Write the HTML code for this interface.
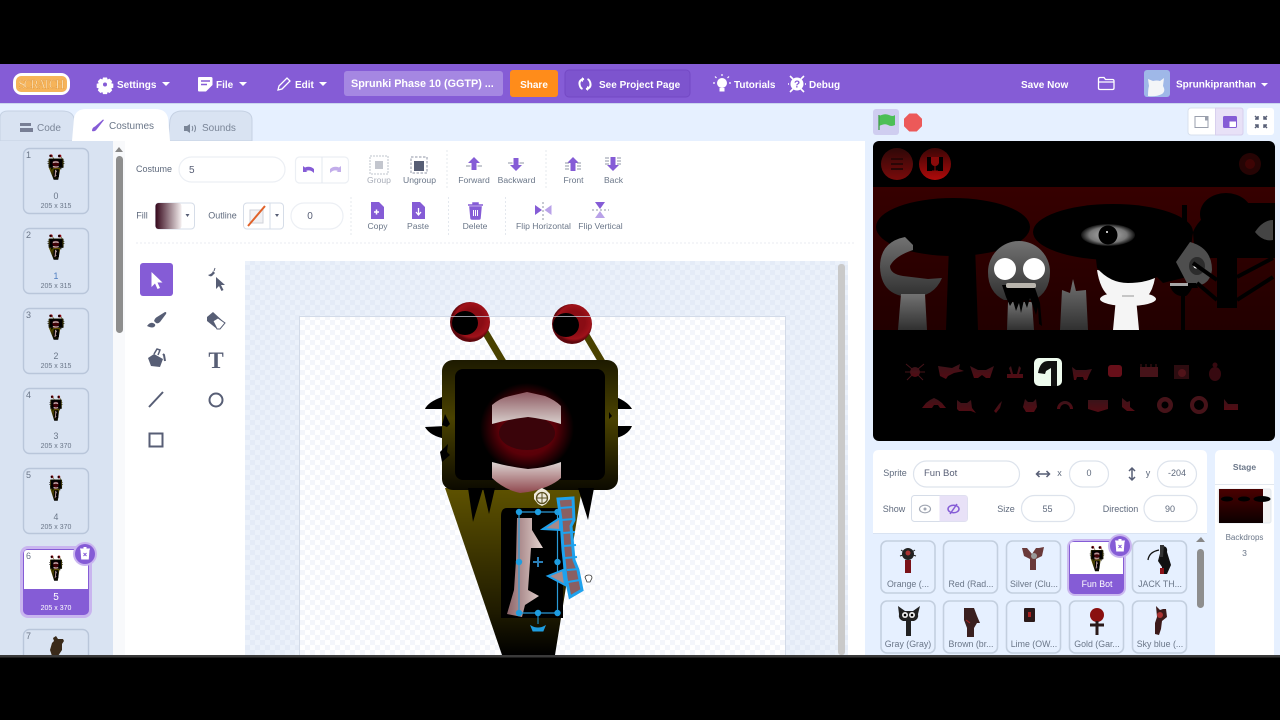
<!DOCTYPE html>
<html><head><meta charset="utf-8"><title>Scratch editor</title>
<style>
html,body{margin:0;padding:0;background:#000;width:1280px;height:720px;overflow:hidden}
svg{display:block;filter:blur(.35px)}
text{font-family:"Liberation Sans",sans-serif}
.h{fill:#fff;font-size:10px;font-weight:700}
.l{fill:#5c6b80;font-size:10px}
.m{text-anchor:middle}
.t{fill:#6a7688;font-size:8.6px;text-anchor:middle}
.s{fill:#6a7688;font-size:7px;text-anchor:middle}
.n{fill:#6a7688;font-size:9px}
.c{fill:#6a7688;font-size:8.8px;text-anchor:middle}
.i{fill:#5f6a7d;font-size:9px;text-anchor:middle}
.card{fill:#e6f0ff;stroke:#c3cfdf;stroke-width:1.6}
.cc{fill:#d9e3f2;stroke:#b9c6da;stroke-width:1.4}
.inp{fill:#fff;stroke:#eceff4;stroke-width:1.2}
.inp2{fill:#fff;stroke:#dde3ec;stroke-width:1.2}
.p{fill:#855cd6}
.tool{fill:none;stroke:#575e75;stroke-width:2}
.tf{fill:#575e75}
.red{fill:url(#ic)}
</style></head><body>
<svg width="1280" height="720" viewBox="0 0 1280 720" xmlns="http://www.w3.org/2000/svg">
<defs>
<pattern id="chk" width="10" height="10" patternUnits="userSpaceOnUse"><rect width="10" height="10" fill="#fff"/><rect width="5" height="5" fill="#f4f6fb"/><rect x="5" y="5" width="5" height="5" fill="#f4f6fb"/></pattern>
<pattern id="chk2" width="10" height="10" patternUnits="userSpaceOnUse"><rect width="10" height="10" fill="#ebf1fa"/><rect width="5" height="5" fill="#e4ebf7"/><rect x="5" y="5" width="5" height="5" fill="#e4ebf7"/></pattern>
<linearGradient id="fill" x1="0" x2="1" y1="0" y2="0"><stop offset="0" stop-color="#35061a"/><stop offset="1" stop-color="#f4eeee"/></linearGradient>
<linearGradient id="ol" x1="0" x2="0" y1="0" y2="1"><stop offset="0" stop-color="#5e5200"/><stop offset=".75" stop-color="#1e1a00"/><stop offset="1" stop-color="#000"/></linearGradient>
<linearGradient id="head" x1="0" x2="0" y1="0" y2="1"><stop offset="0" stop-color="#1d1a00"/><stop offset=".45" stop-color="#4a4200"/><stop offset="1" stop-color="#0c0a00"/></linearGradient>
<linearGradient id="teeth" x1="0" x2="0" y1="0" y2="1"><stop offset="0" stop-color="#8e5a62"/><stop offset="1" stop-color="#d8cfcc"/></linearGradient>
<linearGradient id="teeth2" x1="0" x2="0" y1="0" y2="1"><stop offset="0" stop-color="#dcd4d2"/><stop offset="1" stop-color="#90484e"/></linearGradient>
<linearGradient id="pt" x1="0" x2="1" y1="0" y2="0"><stop offset="0" stop-color="#8c6468"/><stop offset="1" stop-color="#e4d4d0"/></linearGradient>
<radialGradient id="mouth"><stop offset="0" stop-color="#6a0810"/><stop offset=".6" stop-color="#5a0008"/><stop offset="1" stop-color="#000"/></radialGradient>
<radialGradient id="eye" cx=".55" cy=".45"><stop offset=".55" stop-color="#8a0c14"/><stop offset=".85" stop-color="#a0121a"/><stop offset="1" stop-color="#5e060c"/></radialGradient>
<linearGradient id="gr" x1="0" x2="0" y1="0" y2="1"><stop offset="0" stop-color="#727272"/><stop offset="1" stop-color="#303030"/></linearGradient>
<linearGradient id="bg" x1="0" x2="0" y1="0" y2="1"><stop offset="0" stop-color="#360000"/><stop offset="1" stop-color="#220000"/></linearGradient>
<linearGradient id="ic" x1="0" x2="0" y1="0" y2="1"><stop offset="0" stop-color="#4e1a22"/><stop offset="1" stop-color="#70101a"/></linearGradient>
<linearGradient id="btn" x1="0" x2="0" y1="0" y2="1"><stop offset="0" stop-color="#2e0808"/><stop offset="1" stop-color="#7a0a0a"/></linearGradient>
<linearGradient id="btn2" x1="0" x2="0" y1="0" y2="1"><stop offset="0" stop-color="#3a0505"/><stop offset="1" stop-color="#b00a0a"/></linearGradient>
<linearGradient id="thb" x1="0" x2="0" y1="0" y2="1"><stop offset="0" stop-color="#4a0000"/><stop offset="1" stop-color="#0c0000"/></linearGradient>
<radialGradient id="geye"><stop offset="0" stop-color="#b5b5b5"/><stop offset=".7" stop-color="#777"/><stop offset="1" stop-color="#111"/></radialGradient>
<g id="bot">
<path d="M484 330L503 362M586 335L602 362" stroke="#4a4200" stroke-width="7"/>
<circle cx="470" cy="322" r="20" fill="url(#eye)"/><ellipse cx="465" cy="323" rx="13" ry="12" fill="#000"/>
<circle cx="572" cy="324" r="20" fill="url(#eye)"/><ellipse cx="566" cy="325" rx="13" ry="12" fill="#000"/>
<path d="M425 409Q428 402 442 397V409ZM425 427Q430 436 446 439V426ZM632 409Q628 402 616 397V409ZM632 426Q628 436 612 439V426Z" fill="#000"/>
<path d="M445 488L502 655H555L582 488Z" fill="url(#ol)"/>
<rect x="442" y="360" width="176" height="130" rx="11" fill="url(#head)"/>
<rect x="455" y="369" width="150" height="111" rx="8" fill="#000"/>
<path d="M440 452l8-8-1 8 3 3-8 7zM609 412l3 4-3 3zM445 414l5 10-3 3-5-2z" fill="#000"/>
<path d="M468 488L473 522L483 488ZM483 488L489 514L495 488ZM578 488L588 520L594 488Z" fill="#000"/>
<ellipse cx="527" cy="428" rx="47" ry="45" fill="url(#mouth)"/>
<ellipse cx="527" cy="433" rx="28" ry="17" fill="#3a040a"/>
<path d="M492 424V405Q500 398 510 396L527 392L545 396Q555 400 561 406V424Q545 419 528 417Q510 419 492 424Z" fill="url(#teeth)"/>
<path d="M492 462V478Q505 490 520 493L528 492Q550 488 561 478V462Q545 468 528 469Q510 467 492 462Z" fill="url(#teeth2)"/>
<path d="M507 508H557Q563 508 563 514V618H501V516Q501 508 507 508Z" fill="#000"/>
<path d="M517 518H532L532 530L543 548L531 548L528 590L539 596L525 605L522 617L507 614L514 590L516 560Z" fill="url(#pt)"/>
</g>
</defs>

<rect width="1280" height="720" fill="#000"/>
<rect y="64" width="1280" height="591" fill="#e6f0ff"/>

<!-- header -->
<rect y="64" width="1280" height="39.5" fill="#855cd6"/>
<rect y="103" width="1280" height="1" fill="#c9d6ee"/>
<rect x="13" y="73" width="57" height="22" rx="9" fill="#fff"/>
<rect x="16" y="76" width="51" height="16" rx="5" fill="#f6b45a"/>
<text x="41.5" y="88.5" font-size="12.5" fill="#fbe6bf" stroke="#e08f2e" stroke-width=".3" text-anchor="middle" textLength="46" style="font-family:'Liberation Serif',serif">SCRATCH</text>

<path d="M103 77.5h4l.6 2 2-.9 2.6 2.6-.9 2 2 .6v4l-2 .6.9 2-2.6 2.6-2-.9-.6 2h-4l-.6-2-2 .9-2.6-2.6.9-2-2-.6v-4l2-.6-.9-2 2.6-2.6 2 .9z" fill="#fff"/>
<circle cx="105" cy="84.5" r="2" fill="#855cd6"/>
<text class="h" x="117" y="88">Settings</text><path d="M162 82h8l-4 4z" fill="#fff"/>
<path d="M199 77h12q1.500 0 1.500 1.500V85L206 91.500h-7q-1 0-1-1V78q0-1 1-1z" fill="#fff"/>
<path d="M201 81h9M201 84.500h6" stroke="#855cd6" stroke-width="1.400"/>
<text class="h" x="216" y="88">File</text><path d="M239 82h8l-4 4z" fill="#fff"/>
<path d="M278 90l1-4 8-8 3 3-8 8z" fill="none" stroke="#fff" stroke-width="1.300"/>
<text class="h" x="295" y="88">Edit</text><path d="M319 82h8l-4 4z" fill="#fff"/>
<rect x="344" y="71" width="159" height="25" rx="3" fill="#a587e2"/>
<text class="h" x="351" y="87" style="font-size:10.8px">Sprunki Phase 10 (GGTP) ...</text>
<rect x="510" y="70" width="48" height="27" rx="3" fill="#ff8c1a"/>
<text class="h m" x="534" y="88">Share</text>
<rect x="565" y="70" width="125" height="27" rx="4" fill="#7d54ce" stroke="#7449c4"/>
<path d="M584 79q-5 1-4.500 5t3 5M586 89q5-1 4.500-5t-3-5" fill="none" stroke="#fff" stroke-width="2"/>
<path d="M583 77l0 5-3-2zM587 91l0-5 3 2z" fill="#fff"/>
<text class="h" x="599" y="88">See Project Page</text>
<circle cx="722" cy="83" r="5" fill="#fff"/><rect x="719.5" y="88" width="5" height="3.5" fill="#fff"/>
<path d="M722 74v2M715 76.500l1.500 1.500M729 76.500l-1.500 1.500M713 83h2M729 83h2" stroke="#fff" stroke-width="1.200"/>
<text class="h" x="734" y="88">Tutorials</text>
<circle cx="797" cy="84" r="6.5" fill="#fff"/>
<path d="M790 76l3 3M804 76l-3 3M789 84h-1M805 84h1M790 92l3-3M804 92l-3-3" stroke="#fff" stroke-width="1.600"/>
<text x="797" y="87.5" text-anchor="middle" font-size="10" font-weight="700" fill="#855cd6">?</text>
<text class="h" x="809" y="88">Debug</text>
<text class="h" x="1021" y="88">Save Now</text>
<path d="M1098.500 82v-3q0-1.500 1.500-1.500h4l1.500 2h7q1.500 0 1.500 1.500V88q0 1.500-1.500 1.500H1100q-1.500 0-1.500-1.500z M1098.500 82h15" fill="none" stroke="#fff" stroke-width="1.300"/>
<rect x="1144" y="70" width="26" height="27" rx="3" fill="#9fb8e8"/>
<path d="M1148 96q0-7 1-10l-1-7 5 2q4-1 7 0l4-3-1 8q3 5-1 8-6 3-14 2z" fill="#f3f5f8"/>
<text class="h" x="1176" y="87.5">Sprunkipranthan</text><path d="M1261 83h7l-3.500 3.500z" fill="#fff"/>

<!-- tabs -->
<path d="M0 141V118Q0 111 8 111H62Q72 111 74 118L78 141Z" fill="#d9e3f2" stroke="#c5d1e3"/>
<path d="M168 141L170 120Q172 111 182 111H240Q252 111 252 120V141Z" fill="#d9e3f2" stroke="#c5d1e3"/>
<path d="M72 141L74 118Q76 109 86 109H155Q166 109 168 118L170 141Z" fill="#fff"/>
<rect x="20" y="123" width="11" height="3" fill="#575e75" opacity=".75"/><rect x="20" y="128" width="13" height="4" fill="#575e75" opacity=".75"/>
<text x="37" y="131" font-size="10" fill="#7a8597">Code</text>
<path d="M92 131q3 1 5-2l7-9-1-.5-8 7q-3 1-3 4.500z" class="p"/>
<text x="109" y="129" font-size="10" fill="#6a7688">Costumes</text>
<path d="M184 126h3l3-2v9l-3-2h-3z" fill="#7a8597"/><path d="M192 126q1.500 2 0 5M194.500 125q2 3 0 7" stroke="#7a8597" fill="none"/>
<text x="202" y="131" font-size="10" fill="#7a8597">Sounds</text>

<!-- left list -->
<rect y="141" width="113" height="514" fill="#d9e3f2"/>
<rect x="113" y="141" width="12" height="514" fill="#f8f9fb"/>
<rect x="125" y="141" width="740" height="514" fill="#fff"/>
<path d="M115 152l4-5 4 5z" fill="#888"/>
<rect x="116" y="156" width="7" height="177" rx="3.5" fill="#8e8e8e"/>

<rect class="cc" x="23.5" y="148.5" width="65" height="65" rx="6"/>
<rect class="cc" x="23.5" y="228.5" width="65" height="65" rx="6"/>
<rect class="cc" x="23.5" y="308.5" width="65" height="65" rx="6"/>
<rect class="cc" x="23.5" y="388.5" width="65" height="65" rx="6"/>
<rect class="cc" x="23.5" y="468.5" width="65" height="65" rx="6"/>
<rect x="20" y="546" width="72" height="72" rx="8" fill="#c9b5ef"/>
<rect x="23" y="549" width="66" height="66" rx="5" class="p"/>
<path d="M24 589V553q0-3 3-3H85q3 0 3 3V589Z" fill="#fff"/>
<rect class="cc" x="23.5" y="629.5" width="65" height="40" rx="6"/>

<text class="n" x="26" y="158">1</text><text class="n" x="26" y="238">2</text><text class="n" x="26" y="318">3</text><text class="n" x="26" y="398">4</text><text class="n" x="26" y="478">5</text><text class="n" x="26" y="559">6</text><text class="n" x="26" y="639">7</text>

<use href="#bot" transform="translate(56 154.5) scale(.085 .072) translate(-529 -304)"/>
<use href="#bot" transform="translate(56 234.5) scale(.085 .072) translate(-529 -304)"/>
<use href="#bot" transform="translate(56 314.5) scale(.085 .072) translate(-529 -304)"/>
<use href="#bot" transform="translate(56 395.5) scale(.065 .072) translate(-529 -304)"/>
<use href="#bot" transform="translate(56 475.5) scale(.068 .072) translate(-529 -304)"/>
<use href="#bot" transform="translate(56 555.5) scale(.068 .072) translate(-529 -304)"/>
<path d="M50 650l2-7 2-2-1-3 3-2 2 3 5 0 1 2-2 3 0 6-4 6h-6z" fill="#3a2a1a"/>

<text class="c" x="56" y="199">0</text><text class="s" x="56" y="208">205 x 315</text>
<text class="c" x="56" y="279" style="fill:#4d7cc0">1</text><text class="s" x="56" y="288">205 x 315</text>
<text class="c" x="56" y="359">2</text><text class="s" x="56" y="368">205 x 315</text>
<text class="c" x="56" y="439">3</text><text class="s" x="56" y="448">205 x 370</text>
<text class="c" x="56" y="520">4</text><text class="s" x="56" y="529">205 x 370</text>
<text class="c" x="56" y="600" style="fill:#fff;font-size:10px">5</text><text class="s" x="56" y="610" style="fill:#fff">205 x 370</text>
<circle cx="85" cy="554" r="12" fill="#c9b5ef"/><circle cx="85" cy="554" r="10" class="p"/>
<path d="M81 550h8l-.7 9h-6.600z M80 549h10" fill="#fff" stroke="#fff"/><rect x="83.5" y="547" width="3" height="2" fill="#fff"/>
<path d="M83.500 553l3 3M86.500 553l-3 3" stroke="#855cd6"/>

<!-- costume toolbar -->
<text class="i" x="154" y="172">Costume</text>
<rect class="inp" x="179" y="157" width="106" height="25" rx="12.5"/>
<text x="189" y="173" font-size="10" fill="#575e75">5</text>
<rect class="inp" x="295.5" y="157" width="53" height="26" rx="4"/><path d="M322 157v26" stroke="#e3e8ef"/>
<path d="M303 172v-6l2 1.500q5-2 9 1.500v4q-4-4-8-2l1.500 1z" class="p"/>
<path d="M341 172v-6l-2 1.500q-5-2-9 1.500v4q4-4 8-2l-1.500 1z" fill="#855cd6" opacity=".5"/>

<path d="M370 156h18v18h-18z" fill="none" stroke="#bfc4ce" stroke-dasharray="2 1"/><rect x="375" y="161" width="8" height="8" fill="#c3c6ce"/>
<text class="t" x="379" y="183" style="fill:#a8adb8">Group</text>
<path d="M411 157h16v16h-16z" fill="none" stroke="#8f95a6" stroke-dasharray="2.500 1.500"/><rect x="414" y="161" width="10" height="10" fill="#575e75"/>
<text class="t" x="419.5" y="183">Ungroup</text>
<path d="M447 150v40M546 150v40M351 197v38M448.500 197v38M505.500 197v38" stroke="#e4e8ee" stroke-dasharray="2 2"/>
<path d="M474 157l6 6h-3.500v7h-5v-7H468z" class="p"/><path d="M466 166h4.500M477.500 166h4.500" stroke="#8f95a6"/>
<text class="t" x="474" y="183">Forward</text>
<path d="M516 171l-6-6h3.500v-7h5v7H522z" class="p"/><path d="M508 163h4.500M519.500 163h4.500" stroke="#8f95a6"/>
<text class="t" x="516.5" y="183">Backward</text>
<path d="M573 157l6 6h-3.500v8h-5v-8H567z" class="p"/><path d="M565 163h4M565 166h4M565 169h4M577 163h4M577 166h4M577 169h4" stroke="#8f95a6"/>
<text class="t" x="573.5" y="183">Front</text>
<path d="M613 171l-6-6h3.500v-8h5v8H619z" class="p"/><path d="M605 158h4M605 161h4M605 164h4M617 158h4M617 161h4M617 164h4" stroke="#8f95a6"/>
<text class="t" x="613.5" y="183">Back</text>

<text class="i" x="142" y="218.5">Fill</text>
<rect x="155.5" y="203" width="39" height="26" rx="3.5" fill="#fff" stroke="#d6dde8"/>
<rect x="155.5" y="203" width="26" height="26" rx="3" fill="url(#fill)"/>
<path d="M185.500 214h4l-2 3z" fill="#575e75"/>
<text class="i" x="222.5" y="218.5">Outline</text>
<rect x="243.5" y="203" width="40" height="26" rx="3.5" fill="#fff" stroke="#d6dde8"/><path d="M270 203v26" stroke="#d6dde8"/>
<rect x="250" y="210" width="13" height="13" fill="#f1f1f4" stroke="#cfd2da"/>
<path d="M248 226l17-20" stroke="#e0622a" stroke-width="2"/>
<path d="M275 214h4l-2 3z" fill="#575e75"/>
<rect class="inp" x="291" y="203" width="52" height="26" rx="13"/>
<text x="310" y="219" font-size="10" fill="#575e75" text-anchor="middle">0</text>

<path d="M371 202h8l5 5v12h-13z" class="p"/><path d="M374 212h5M376.500 209.500v5" stroke="#fff" stroke-width="1.500"/>
<text class="t" x="377.5" y="229">Copy</text>
<path d="M412 202h8l5 5v12h-13z" class="p"/><path d="M418.500 208v6M416 212l2.500 3 2.500-3" stroke="#fff" stroke-width="1.300" fill="none"/>
<text class="t" x="418" y="229">Paste</text>
<path d="M468 205h15M470 207h11l-1 11q0 1-1 1h-7q-1 0-1-1z M473 205v-2h5v2" fill="#855cd6" stroke="#855cd6" stroke-width="1.500"/>
<path d="M473.500 210v6M475.500 210v6M477.500 210v6" stroke="#fff"/>
<text class="t" x="475" y="229">Delete</text>
<path d="M535 205l7 5-7 5z" class="p"/><path d="M551.500 205l-7 5 7 5z" fill="#b9a2e8"/><path d="M543 202v18" stroke="#8f95a6" stroke-dasharray="2 2"/>
<text class="t" x="543.5" y="229">Flip Horizontal</text>
<path d="M595 202h10l-5 7z" class="p"/><path d="M595 218h10l-5-7z" fill="#b9a2e8"/><path d="M592 210h17" stroke="#8f95a6" stroke-dasharray="2 2"/>
<text class="t" x="600.5" y="229">Flip Vertical</text>
<path d="M136 243h720" stroke="#e8ebf0" stroke-dasharray="2 2"/>

<!-- tools -->
<rect x="140" y="263" width="33" height="33" rx="3" class="p"/>
<path d="M151.500 272v15l3.500-3.500 2.500 5.500 2.500-1-2.500-5.500h5z" fill="#fff"/>
<path d="M216 277v12l3-3 2.500 5 2-1-2.500-5h4z" class="tf"/><path d="M208 275q4-1 5-4l2 2-3 3q-2 1-4-1z" class="tf"/><path d="M214 271l1-3" stroke="#575e75"/>
<path d="M147 326q3-4 6-3 3 1 2 3-2 3-8 0z" class="tf"/><path d="M154 321q1-3 3-4l8-5q2 0 1 2l-6 8q-2 2-4 1z" class="tf"/>
<path d="M207 317l6-5 12 11-5 6h-3l-10-8z" class="tf"/><path d="M213 321l5-3 7 5-5 6h-3z" fill="#fff" stroke="#575e75" stroke-width="1"/>
<path d="M148 358l6-4 9 5-3 8-9-1z" class="tf"/><path d="M154 354l3-5 3 1-2 5" fill="none" stroke="#575e75" stroke-width="1.500"/><path d="M163 354l1 1 1 6" fill="none" stroke="#575e75" stroke-width="2"/>
<text x="216" y="368" font-size="23" font-weight="700" text-anchor="middle" fill="#575e75" style="font-family:'Liberation Serif',serif">T</text>
<path d="M149 407l14-15" class="tool"/>
<circle cx="216" cy="400" r="6.5" class="tool"/>
<rect x="149.5" y="433.5" width="13" height="13" class="tool"/>

<!-- canvas -->
<rect x="245" y="261" width="603" height="394" fill="url(#chk2)"/>
<rect x="299.5" y="316.5" width="486" height="345" fill="url(#chk)" stroke="#d3dbe8"/>
<rect x="838" y="264" width="7" height="391" rx="3" fill="#c9c9c9"/>
<clipPath id="cv"><rect x="245" y="261" width="590" height="394"/></clipPath>
<g clip-path="url(#cv)">
<use href="#bot"/>
<path d="M299 316.500H786" stroke="#d3dbe8" opacity=".7"/>
<path d="M538 490l4-2 4 2 4 4 0 5-4 5-4 2-4-2-4-5 0-5z" fill="#efeadb"/><circle cx="542" cy="498" r="5.5" fill="none" stroke="#5a5020" stroke-width="1.300"/><path d="M536 498h12M542 492v12" stroke="#5a5020"/>
<path d="M519 512h38.500v101H519z" fill="none" stroke="#2a9ad6" stroke-width="1.200"/>
<g fill="#1e9de0"><circle cx="519" cy="512" r="3.2"/><circle cx="538" cy="512" r="3.2"/><circle cx="557.5" cy="512" r="3.2"/><circle cx="519" cy="562" r="3.2"/><circle cx="557.5" cy="562" r="3.2"/><circle cx="519" cy="613" r="3.2"/><circle cx="538" cy="613" r="3.2"/><circle cx="557.5" cy="613" r="3.2"/></g>
<path d="M538 557v10M533 562h10" stroke="#2a7fb8" stroke-width="2"/>
<path d="M538 614v10M531 626q7 4 14 0l-2 5h-10z" stroke="#1e9de0" fill="#1e9de0"/>
<path d="M558 499L573 498L574 520L571 526L574 560L578 570L582 590L570 597L566 578L563 550L561 520Z" fill="#8a5f62" stroke="#1ea2ee" stroke-width="3"/>
<path d="M560 508l13-1M561 520l13-1M563 533l12-1M564 546l12-1M565 558l12-1M567 570l12-1M568 582l12-2" stroke="#1ea2ee" stroke-width="2"/>
<path d="M543 529l17-11v12zM548 576l15-6 2 15z" fill="#a98a8a" stroke="#1ea2ee" stroke-width="2"/>
<path d="M585 577q1-2 4-2t3 3l-2 4h-3z" fill="#fff" stroke="#333" stroke-width=".8"/>
</g>

<!-- stage controls -->
<rect x="873" y="109" width="26" height="26" rx="3" fill="#cfcdf0"/>
<path d="M879 116q6-3 10-1t6 0v10q-4 2-7 0t-9 1z" fill="#4cbf56"/><path d="M879 115v15" stroke="#3f9e47" stroke-width="1.300"/>
<path d="M909.500 114h7l5 5v7l-5 5h-7l-5-5v-7z" fill="#ec5959" stroke="#ec5959" stroke-linejoin="round"/>
<rect x="1188" y="108" width="55" height="27" rx="3" fill="#fff" stroke="#d8e0ee"/>
<path d="M1215.500 108h25q2.500 0 2.500 2.500v22q0 2.500-2.500 2.500h-25z" fill="#e8e1f7" stroke="#d8d0ee"/>
<rect x="1195" y="116.5" width="13" height="11" fill="#fff" stroke="#9a9fac"/><rect x="1205" y="116.5" width="3" height="4" fill="#9a9fac"/>
<rect x="1223.5" y="116.5" width="13" height="11" rx="1" fill="#fff" stroke="#855cd6"/><rect x="1223.5" y="116.5" width="6" height="11" class="p"/><rect x="1229" y="116.5" width="7" height="5" class="p"/>
<rect x="1247" y="108" width="27" height="27" rx="3" fill="#fff"/>
<path d="M1255 116l3 3M1258 116v3h-3M1267 116l-3 3M1264 116v3h3M1255 128l3-3M1258 128v-3h-3M1267 128l-3-3M1264 128v-3h3" stroke="#575e75" stroke-width="1.500" fill="none"/>

<!-- stage -->
<clipPath id="st"><rect x="873" y="141" width="402" height="300" rx="6"/></clipPath>
<g clip-path="url(#st)">
<rect x="873" y="141" width="402" height="300" fill="#000"/>
<rect x="873" y="187" width="402" height="143" fill="url(#bg)"/>
<ellipse cx="953" cy="227" rx="77" ry="29" fill="#000"/>
<path d="M946 330l3-85h26l3 85z" fill="#000"/>
<path d="M905 237Q880 242 880 267Q881 297 912 297Q934 297 942 278L928 279L903 276Q890 274 890 266Q895 256 913 250L913 245Z" fill="url(#gr)"/>
<path d="M898 330l3-36h24l2 36z" fill="url(#gr)"/>
<path d="M988 272a31 31 0 0 1 62 0q0 20-16 28h-30q-16-8-16-28z" fill="url(#gr)"/>
<path d="M1007 330l1-28h24l2 28z" fill="url(#gr)"/>
<path d="M1002 285h27l6 3 5 15 2 23-3-2-1-17-2 8-6-17-3 10-3-8-3 13-2-10-3 8-3-10-3 5-4-9z" fill="#000"/>
<rect x="1006" y="283" width="30" height="5" rx="2" fill="#b9b5ad"/>
<circle cx="1005" cy="269" r="11" fill="#fff"/><circle cx="1034" cy="269" r="11" fill="#fff"/>
<path d="M1060 330l2-40 8 3 3-14 3 12 10-1 2 40z" fill="url(#gr)"/>
<ellipse cx="1113" cy="232" rx="80" ry="28" fill="#000"/>
<!-- white creature -->
<path d="M1097 270Q1100 290 1110 297H1147Q1153 290 1155 278Z" fill="#f5f5f5"/>
<ellipse cx="1128" cy="299" rx="28" ry="7" fill="#f5f5f5"/>
<path d="M1113 330l3-32h20l3 32z" fill="#f5f5f5"/>
<path d="M1122 296h12" stroke="#777" stroke-width=".8"/>
<path d="M1097 268Q1110 283 1128 283Q1145 283 1157 277L1163 283L1187 277L1193 232L1130 225L1095 250Z" fill="#000"/>
<ellipse cx="1108" cy="235" rx="27" ry="11" fill="url(#geye)"/><circle cx="1108" cy="235" r="9.5" fill="#000"/><circle cx="1107" cy="232" r="1" fill="#fff"/>
<!-- tree and right side -->
<path d="M1193 232Q1200 215 1226 203H1275V258H1195Z" fill="#000"/>
<ellipse cx="1226" cy="214" rx="26" ry="21" fill="#000"/>
<path d="M1190 242Q1212 248 1212 270Q1210 283 1200 285H1188L1176 262Z" fill="#4e4e4e"/>
<ellipse cx="1197" cy="266" rx="8" ry="9" fill="#2c2c2c"/>
<circle cx="1196" cy="266" r="2.5" fill="#fff"/>
<path d="M1182 205h5v25h-5z" fill="#000"/>
<path d="M1172 283h24l2 5h-6q-3 6-6 8h-1v34h-4v-34q-8-1-11-10z" fill="#000"/><rect x="1170" y="283" width="18" height="3" fill="#a8a8a8"/>
<rect x="1217" y="250" width="20" height="58" fill="#000"/>
<path d="M1193 263L1217 280M1197 283L1217 300M1237 300L1273 277M1237 277L1273 258" stroke="#000" stroke-width="4"/>
<path d="M1255 232q8-12 18-12v20q-10 2-18-8z" fill="#444"/>
<!-- rows -->
<g opacity=".75">
<g transform="translate(915 372)"><circle r="5" class="red"/><path d="M-9-8l6 5M9-8l-6 5M-10 0h20M-8 8l5-5M8 8l-5-5" stroke="#5e1a22"/></g>
<path d="M938 366l14 2 8-4-1 5 5 2-10 2-6 3-2 3-6-3z" class="red"/>
<path d="M970 366l8 4h8l8-4-4 12h-4l-4-3-4 3h-4z" class="red"/>
<path d="M1007 378v-4h4l-2-6 2-2 2 8h4l2-8 2 2-2 6h4v4z" class="red"/>
<path d="M1072 367l4 3 10 0 6-1-3 6-2 5h-3l-1-3-6 0-1 3h-2z" class="red"/>
<rect x="1108" y="365" width="14" height="12" rx="3" fill="#8a1522"/>
<rect x="1140" y="367" width="18" height="10" fill="#5e1a22"/><path d="M1141 364v3M1146 364v3M1151 364v3M1156 364v3" stroke="#5e1a22"/>
<rect x="1174" y="365" width="15" height="14" fill="#3c1016"/><circle cx="1182" cy="373" r="4" fill="#6b1a22"/>
<ellipse cx="1215" cy="374" rx="6" ry="7" fill="#4a0d16"/><circle cx="1215" cy="365" r="2.5" fill="#4a0d16"/>
<path d="M922 408l4-5 4-3 4-2 4 2 4 3 4 5-6 0-2-3-4 0-2 3z" class="red"/>
<path d="M957 400l4 3h6l4-3 1 8 4 5-5-2h-12l-2-2z" class="red"/>
<path d="M994 411l5-7 3-3-2 7-4 5z" class="red"/>
<path d="M1025 399l3 3h5l3-3 1 8-3 5h-8l-3-5z" class="red"/>
<path d="M1057 409a8 8 0 0 1 16 0h-3a5 5 0 0 0-10 0z" class="red"/>
<path d="M1088 400h20v9l-10 3-10-3z" class="red"/>
<path d="M1122 398l5 4 3-1v6l5 4h-8l-5-4z" class="red"/>
<circle cx="1165" cy="405" r="8" fill="#5e1a22"/><circle cx="1165" cy="405" r="3.5" fill="#000"/>
<circle cx="1199" cy="405" r="7" fill="none" stroke="#5e1a22" stroke-width="4"/>
<path d="M1224 399l4 5h10v6h-14z" class="red"/>
</g>
<rect x="1034" y="358" width="28" height="28" rx="5" fill="#eefbee"/><path d="M1038 373q2-12 10-12h9v25h-6v-18l-5 3-1 3z" fill="#111"/>
<circle cx="897" cy="164" r="16" fill="url(#btn)"/><path d="M891 159h12M891 164h12M891 169h12" stroke="#2a0606" stroke-width="2"/>
<circle cx="935" cy="164" r="16" fill="url(#btn2)"/><rect x="927" y="157" width="16" height="14" fill="#000"/><path d="M931 157h8v6q-1 3-4 3t-4-3z" fill="#8a0a0a"/><path d="M935 166v5M932 171h6" stroke="#8a0a0a"/>
<circle cx="1250" cy="164" r="11" fill="#260404"/><circle cx="1250" cy="164" r="5" fill="#3e0404"/>
</g>

<!-- sprite pane -->
<path d="M873 533V456q0-6 6-6H1201q6 0 6 6V533Z" fill="#fff"/>
<rect x="873" y="533" width="334" height="122" fill="#e6f0ff"/>
<path d="M873 533.500H1207" stroke="#d9e3f2"/>
<path d="M1215 655V456q0-6 6-6h47q6 0 6 6V655Z" fill="#fff"/>
<path d="M1215 484.500H1274" stroke="#e3e8ef"/>
<text class="i" x="895" y="476">Sprite</text>
<rect class="inp2" x="913.5" y="461" width="106" height="26" rx="13"/>
<text x="924" y="476" font-size="9.5" fill="#575e75">Fun Bot</text>
<path d="M1037 474h12M1039.500 471l-3 3 3 3M1046.500 471l3 3-3 3" stroke="#575e75" stroke-width="1.500" fill="none"/>
<text class="i" x="1059.5" y="476">x</text>
<rect class="inp2" x="1069.5" y="461" width="39" height="26" rx="13"/>
<text class="i" x="1089" y="476">0</text>
<path d="M1132 468v12M1129 471l3-3 3 3M1129 477l3 3 3-3" stroke="#575e75" stroke-width="1.500" fill="none"/>
<text class="i" x="1148" y="476">y</text>
<rect class="inp2" x="1157.5" y="461" width="39" height="26" rx="13"/>
<text class="i" x="1177" y="476">-204</text>
<text class="i" x="894" y="512">Show</text>
<rect x="911.5" y="495.5" width="56" height="26" rx="3" fill="#fff" stroke="#d6dde8"/>
<path d="M939.500 495.500h25q3 0 3 3v20q0 3-3 3h-25z" fill="#e8e1f7"/>
<ellipse cx="925" cy="509" rx="5.5" ry="3.8" fill="none" stroke="#a0a6b2" stroke-width="1.200"/><circle cx="925" cy="509" r="1.5" fill="#a0a6b2"/>
<ellipse cx="953.5" cy="509" rx="5.5" ry="3.8" fill="none" stroke="#855cd6" stroke-width="1.500"/><path d="M950 514l7-10" stroke="#855cd6" stroke-width="1.500"/>
<text class="i" x="1006" y="512">Size</text>
<rect class="inp2" x="1021.5" y="495.5" width="53" height="26" rx="13"/>
<text class="i" x="1047.5" y="512">55</text>
<text class="i" x="1120.5" y="512">Direction</text>
<rect class="inp2" x="1144" y="495.5" width="53" height="26" rx="13"/>
<text class="i" x="1170" y="512">90</text>
<text class="i" x="1244.5" y="470" style="font-size:8.5px;font-weight:700;fill:#6a7688">Stage</text>
<rect x="1218" y="489" width="53" height="34" rx="2" fill="#f2f2f2" stroke="#e3e8ef"/>
<rect x="1219" y="489" width="44" height="34" fill="url(#thb)"/>
<ellipse cx="1227" cy="499" rx="6" ry="2.5" fill="#000"/><ellipse cx="1244" cy="499" rx="6" ry="2.5" fill="#000"/><ellipse cx="1262" cy="499" rx="8.5" ry="3" fill="#000"/>
<text class="t" x="1244.5" y="540" style="font-size:8px">Backdrops</text>
<text class="t" x="1244.5" y="556">3</text>

<path d="M1196 542l5-5 4 5z" fill="#888"/>
<rect x="1197" y="549" width="7" height="59" rx="3.5" fill="#8e8e8e"/>
<clipPath id="sp"><rect x="873" y="533" width="334" height="122"/></clipPath>
<g clip-path="url(#sp)">
<rect class="card" x="881" y="541" width="54" height="52" rx="6"/>
<rect class="card" x="943.5" y="541" width="54" height="52" rx="6"/>
<rect class="card" x="1006.5" y="541" width="54" height="52" rx="6"/>
<rect x="1067" y="539" width="59" height="57" rx="8" fill="#cbb9ef"/>
<rect x="1069" y="541" width="55" height="53" rx="6" class="p"/>
<path d="M1070 574V545q0-3 3-3H1120q3 0 3 3V574Z" fill="#fff"/>
<rect class="card" x="1132.5" y="541" width="54" height="52" rx="6"/>
<rect class="card" x="881" y="601" width="54" height="52" rx="6"/>
<rect class="card" x="943.5" y="601" width="54" height="52" rx="6"/>
<rect class="card" x="1006.5" y="601" width="54" height="52" rx="6"/>
<rect class="card" x="1069.5" y="601" width="54" height="52" rx="6"/>
<rect class="card" x="1132.5" y="601" width="54" height="52" rx="6"/>
<!-- thumbs -->
<circle cx="908" cy="554" r="6" fill="#222"/><circle cx="908" cy="553" r="2.5" fill="#a33"/><path d="M901 550l3 2M915 550l-3 2M900 556l3-1M916 556l-3-1" stroke="#222"/><rect x="905" y="560" width="6" height="13" fill="#7a1218"/>
<path d="M1027 548l5 6 4-6 3 0 5-1-2 9-6 3v11h-6v-11l-6-3-2-8z" fill="#6a3a3a"/><circle cx="1034" cy="556" r="3" fill="#999"/>
<use href="#bot" transform="translate(1097 546) scale(.072 .072) translate(-529 -304)"/>
<path d="M1162 546q6 0 5 6l4 13-4 9h-5v-7l-4-6z" fill="#111"/><path d="M1148 560q1-8 11-10" stroke="#111" stroke-width="1.300" fill="none"/><path d="M1160 545h4l-1 12h-3z" fill="#333"/><rect x="1160" y="568" width="4" height="6" fill="#8a1218"/>
<path d="M898 606l7 5h8l7-5-2 8q1 5-4 7h-3v15h-5v-15h-3q-5-2-4-7z" fill="#222"/><circle cx="905" cy="615" r="3" fill="#eee"/><circle cx="912" cy="615" r="3" fill="#eee"/><circle cx="905" cy="615" r="1.3"/><circle cx="912" cy="615" r="1.3"/>
<path d="M964 608h10l3 8 3 7h-3l-3 5v9h-7v-9l-3-8z" fill="#3a2020"/><path d="M966 620l4 3" stroke="#a22"/>
<rect x="1024" y="608" width="11" height="14" rx="1" fill="#2c1a1a"/><rect x="1028" y="612" width="3" height="5" fill="#a22"/>
<circle cx="1097" cy="615" r="7" fill="#8a1010"/><path d="M1090 625h14M1097 621v14" stroke="#2a1a1a" stroke-width="3"/>
<path d="M1156 606l4 4 3-1 3 0 1 8-5 4-1 8-2 6-4-1v-11l2-6z" fill="#3c1a1a"/><circle cx="1160" cy="615" r="3" fill="#a33"/>
<text class="c" x="908" y="587">Orange (...</text>
<text class="c" x="971" y="587">Red (Rad...</text>
<text class="c" x="1034" y="587">Silver (Clu...</text>
<text class="c" x="1097" y="587" style="fill:#fff">Fun Bot</text>
<text class="c" x="1160" y="587">JACK TH...</text>
<text class="c" x="908" y="647">Gray (Gray)</text>
<text class="c" x="971" y="647">Brown (br...</text>
<text class="c" x="1034" y="647">Lime (OW...</text>
<text class="c" x="1097" y="647">Gold (Gar...</text>
<text class="c" x="1160" y="647">Sky blue (...</text>
</g>
<circle cx="1120" cy="546" r="12" fill="#c9b5ef"/><circle cx="1120" cy="546" r="10" class="p"/>
<path d="M1116 542h8l-.7 9h-6.600z M1115 541h10" fill="#fff" stroke="#fff"/><rect x="1118.5" y="539" width="3" height="2" fill="#fff"/>
<path d="M1118.500 545l3 3M1121.500 545l-3 3" stroke="#855cd6"/>

<!-- bottom cover -->
<rect y="655" width="1280" height="2.5" fill="#3a3a3a"/>
<rect y="657.5" width="1280" height="62.5" fill="#000"/>
<rect y="0" width="1280" height="64" fill="#000"/>
<rect y="64" width="1280" height="1" fill="#855cd6"/>
</svg>
</body></html>
